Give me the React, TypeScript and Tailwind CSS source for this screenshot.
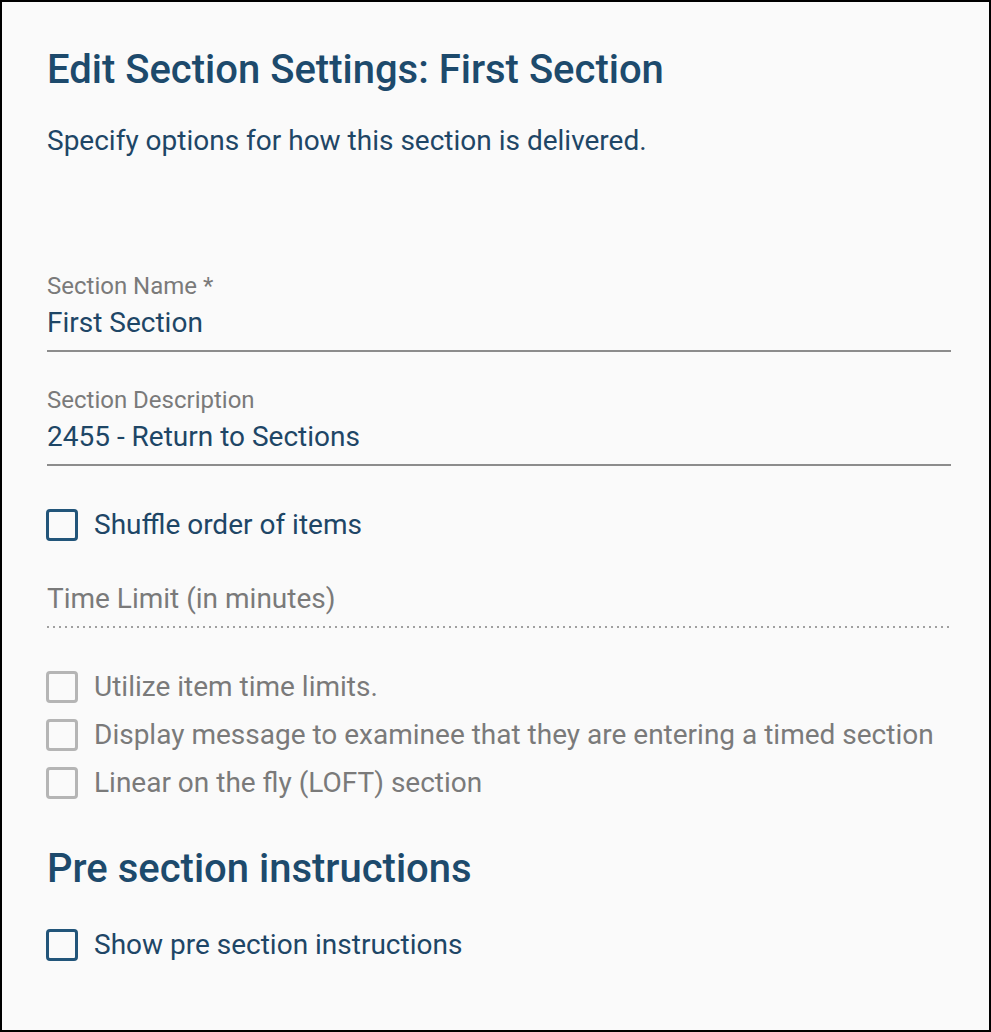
import React from 'react'

const font = { fontFamily: 'Roboto, "Noto Sans", sans-serif' }

function Checkbox({ label, disabled }: { label: string; disabled?: boolean }) {
  return (
    <label className="flex h-12 items-center gap-4">
      <span
        className={
          disabled
            ? '-ml-px h-8 w-8 shrink-0 rounded-[4px] border-[3px] border-[#b5b5b5]'
            : '-ml-px h-8 w-8 shrink-0 rounded-[4px] border-[3px] border-[#22557a]'
        }
      />
      <span className={disabled ? 'text-[28px] leading-9 text-[#7a7a7a]' : 'text-[28px] leading-9 text-[#1e4666]'}>
        {label}
      </span>
    </label>
  )
}

function TextField({ label, value }: { label: string; value: string }) {
  return (
    <div className="flex flex-col border-b-2 border-[#8c8c8c] pb-[9px]">
      <span className="text-[24px] leading-[30px] text-[#7a7a7a]">{label}</span>
      <span className="mt-1 text-[28px] leading-9 text-[#1e4666]">{value}</span>
    </div>
  )
}

export default function App() {
  return (
    <div className="h-[1032px] w-[991px] border-2 border-black bg-[#fafafa]" style={font}>
      <div className="flex flex-col pt-[44px] pl-[45px] pr-[38px]">
        <h1 className="text-[40px] leading-[48px] font-medium text-[#1d4a6c]">Edit Section Settings: First Section</h1>
        <p className="mt-[29px] text-[28px] leading-9 text-[#1e4666]">
          Specify options for how this section is delivered.
        </p>

        <div className="mt-[112px]">
          <TextField label="Section Name *" value="First Section" />
        </div>
        <div className="mt-[33px]">
          <TextField label="Section Description" value="2455 - Return to Sections" />
        </div>

        <div className="mt-[35px]">
          <Checkbox label="Shuffle order of items" />
        </div>

        <div className="mt-[32px] flex flex-col">
          <span className="pb-[9px] text-[28px] leading-9 text-[#7a7a7a]">Time Limit (in minutes)</span>
          <div className="h-[2px] bg-[repeating-linear-gradient(to_right,#a0a0a0_0px,#a0a0a0_2px,transparent_2px,transparent_6px)]" />
        </div>

        <div className="mt-[35px] flex flex-col">
          <Checkbox label="Utilize item time limits." disabled />
          <Checkbox label="Display message to examinee that they are entering a timed section" disabled />
          <Checkbox label="Linear on the fly (LOFT) section" disabled />
        </div>

        <h2 className="mt-[38px] text-[40px] leading-[48px] font-medium text-[#1d4a6c]">Pre section instructions</h2>

        <div className="mt-[28px]">
          <Checkbox label="Show pre section instructions" />
        </div>
      </div>
    </div>
  )
}
